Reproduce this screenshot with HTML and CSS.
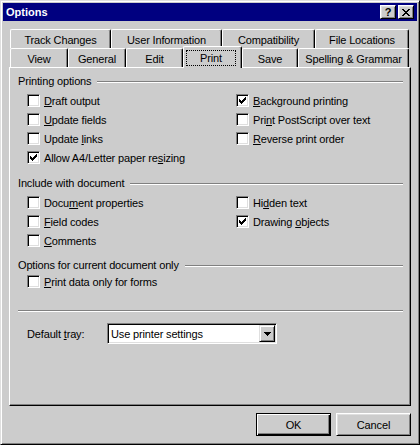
FILE: index.html
```html
<!DOCTYPE html>
<html>
<head>
<meta charset="utf-8">
<title>Options</title>
<link rel="stylesheet" href="styles.css">
</head>
<body>
<div class="window">
  <div class="titlebar">
    <span class="title">Options</span>
    <div class="tb-buttons">
      <span class="tb-btn help">?</span>
      <span class="tb-btn close"><svg width="8" height="7" viewBox="0 0 8 7" shape-rendering="crispEdges"><path d="M0 0h2v1h-2z M6 0h2v1h-2z M1 1h2v1h-2z M5 1h2v1h-2z M2 2h4v1h-4z M3 3h2v1h-2z M2 4h4v1h-4z M1 5h2v1h-2z M5 5h2v1h-2z M0 6h2v1h-2z M6 6h2v1h-2z" fill="#000"/></svg></span>
    </div>
  </div>

  <div class="tabs">
    <div class="tab-row back">
      <div class="tab w-track">Track Changes</div>
      <div class="tab w-user">User Information</div>
      <div class="tab w-compat">Compatibility</div>
      <div class="tab w-files">File Locations</div>
    </div>
    <div class="tab-row front">
      <div class="tab w-view">View</div>
      <div class="tab w-general">General</div>
      <div class="tab w-edit">Edit</div>
      <div class="tab w-print selected"><span class="focus">Print</span></div>
      <div class="tab w-save">Save</div>
      <div class="tab w-spell">Spelling &amp; Grammar</div>
    </div>
  </div>

  <div class="panel">
    <div class="group-title first"><span>Printing options</span></div>
    <div class="cols">
      <div class="col left">
        <label class="cb-row"><span class="cb"></span><span><u>D</u>raft output</span></label>
        <label class="cb-row"><span class="cb"></span><span><u>U</u>pdate fields</span></label>
        <label class="cb-row"><span class="cb"></span><span>Update <u>l</u>inks</span></label>
        <label class="cb-row"><span class="cb"><svg class="check" width="11" height="11" viewBox="1 1 11 11" shape-rendering="crispEdges"><path d="M9 3h1v1h-1z M8 4h2v1h-2z M3 5h1v1h-1z M7 5h3v1h-3z M3 6h2v1h-2z M6 6h3v1h-3z M3 7h5v1h-5z M4 8h3v1h-3z M5 9h1v1h-1z" fill="#000"/></svg></span><span>Allow A4/Letter paper re<u>s</u>izing</span></label>
      </div>
      <div class="col right">
        <label class="cb-row"><span class="cb"><svg class="check" width="11" height="11" viewBox="1 1 11 11" shape-rendering="crispEdges"><path d="M9 3h1v1h-1z M8 4h2v1h-2z M3 5h1v1h-1z M7 5h3v1h-3z M3 6h2v1h-2z M6 6h3v1h-3z M3 7h5v1h-5z M4 8h3v1h-3z M5 9h1v1h-1z" fill="#000"/></svg></span><span><u>B</u>ackground printing</span></label>
        <label class="cb-row"><span class="cb"></span><span>Pri<u>n</u>t PostScript over text</span></label>
        <label class="cb-row"><span class="cb"></span><span><u>R</u>everse print order</span></label>
      </div>
    </div>

    <div class="group-title second"><span>Include with document</span></div>
    <div class="cols">
      <div class="col left">
        <label class="cb-row"><span class="cb"></span><span>Docu<u>m</u>ent properties</span></label>
        <label class="cb-row"><span class="cb"></span><span><u>F</u>ield codes</span></label>
        <label class="cb-row"><span class="cb"></span><span><u>C</u>omments</span></label>
      </div>
      <div class="col right">
        <label class="cb-row"><span class="cb"></span><span>Hi<u>d</u>den text</span></label>
        <label class="cb-row"><span class="cb"><svg class="check" width="11" height="11" viewBox="1 1 11 11" shape-rendering="crispEdges"><path d="M9 3h1v1h-1z M8 4h2v1h-2z M3 5h1v1h-1z M7 5h3v1h-3z M3 6h2v1h-2z M6 6h3v1h-3z M3 7h5v1h-5z M4 8h3v1h-3z M5 9h1v1h-1z" fill="#000"/></svg></span><span>Drawing <u>o</u>bjects</span></label>
      </div>
    </div>

    <div class="group-title third"><span>Options for current document only</span></div>
    <div class="cols tight">
      <div class="col left">
        <label class="cb-row"><span class="cb"></span><span><u>P</u>rint data only for forms</span></label>
      </div>
    </div>

    <div class="separator"></div>

    <div class="tray-row">
      <span class="tray-label">Default <u>t</u>ray:</span>
      <div class="combo">
        <span class="combo-text">Use printer settings</span>
        <span class="combo-btn"><svg width="7" height="4" viewBox="0 0 7 4" shape-rendering="crispEdges"><path d="M0 0h7v1h-7z M1 1h5v1h-5z M2 2h3v1h-3z M3 3h1v1h-1z" fill="#000"/></svg></span>
      </div>
    </div>
  </div>

  <div class="buttons">
    <button class="btn default">OK</button>
    <button class="btn">Cancel</button>
  </div>
</div>
</body>
</html>
```

FILE: styles.css
```css
html, body {
  margin: 0;
  padding: 0;
  background: #cccccc;
}

body {
  font-family: "Liberation Sans", Arial, sans-serif;
  font-size: 11px;
  letter-spacing: -0.15px;
  color: #000;
}

.window {
  width: 420px;
  height: 445px;
  box-sizing: border-box;
  background: #cccccc;
  border: 1px solid;
  border-color: #dfdfdf #000 #000 #dfdfdf;
  box-shadow: inset 1px 1px #fff, inset -1px -1px #808080;
  padding: 2px;
  display: flex;
  flex-direction: column;
}

/* Title bar */
.titlebar {
  height: 18px;
  flex: none;
  background: #000080;
  color: #fff;
  display: flex;
  align-items: center;
  padding: 0 3px;
}

.title {
  font-weight: bold;
  font-size: 11px;
  line-height: 13px;
  letter-spacing: 0;
}

.tb-buttons {
  margin-left: auto;
  display: flex;
  gap: 2px;
}

.tb-btn {
  width: 16px;
  height: 14px;
  box-sizing: border-box;
  background: #cccccc;
  border: 1px solid;
  border-color: #fff #000 #000 #fff;
  box-shadow: inset 1px 1px #dfdfdf, inset -1px -1px #808080;
  display: flex;
  align-items: center;
  justify-content: center;
  color: #000;
}

.tb-btn.help {
  font-weight: bold;
  font-size: 11px;
  line-height: 12px;
}

.tb-btn.close svg {
  display: block;
}

/* Tabs */
.tabs {
  margin-top: 8px;
  margin-left: 7px;
  flex: none;
}

.tab-row {
  display: flex;
  height: 19px;
  align-items: flex-end;
}

.tab {
  height: 19px;
  box-sizing: border-box;
  border-top: 1px solid #fff;
  border-left: 1px solid #fff;
  border-right: 1px solid #000;
  border-radius: 2px 2px 0 0;
  box-shadow: inset -1px 0 #808080;
  display: flex;
  align-items: center;
  justify-content: center;
  padding-top: 2px;
  white-space: nowrap;
  background: #cccccc;
}

.w-track { width: 101px; }
.w-user { width: 111px; }
.w-compat { width: 93px; }
.w-files { width: 94px; }

.w-view { width: 58px; }
.w-general { width: 58px; }
.w-edit { width: 57px; }
.w-print { width: 59px; }
.w-save { width: 56px; }
.w-spell { width: 111px; }

.tab.selected {
  height: 22px;
  margin-bottom: -1px;
  position: relative;
  z-index: 2;
  padding-top: 0;
  padding-right: 3px;
}

.focus {
  display: flex;
  align-items: center;
  justify-content: center;
  width: 50px;
  height: 16px;
  box-sizing: border-box;
  border: 1px dotted #000;
}

/* Panel */
.panel {
  margin-left: 6px;
  width: 402px;
  height: 339px;
  box-sizing: border-box;
  border: 1px solid;
  border-color: #fff #000 #000 #fff;
  box-shadow: inset -1px -1px #808080;
  padding: 7px 7px 0 8px;
  position: relative;
  z-index: 1;
  flex: none;
}

.group-title {
  display: flex;
  align-items: center;
  height: 13px;
  line-height: 13px;
  gap: 6px;
}

.group-title::after {
  content: "";
  flex: 1;
  height: 0;
  border-top: 1px solid #808080;
  border-bottom: 1px solid #fff;
  margin-top: 1px;
}

.group-title.second { margin-top: 10px; }
.group-title.third { margin-top: 9px; }

.cols {
  display: flex;
  padding-left: 9px;
  margin-top: 3px;
}

.cols.tight { margin-top: 0; }

.col {
  display: flex;
  flex-direction: column;
}

.col.left { width: 209px; }

.cb-row {
  display: flex;
  align-items: center;
  gap: 4px;
  height: 19px;
  white-space: nowrap;
}

.cb {
  width: 13px;
  height: 13px;
  box-sizing: border-box;
  flex: none;
  background: #fff;
  border: 1px solid;
  border-color: #808080 #fff #fff #808080;
  box-shadow: inset 1px 1px #000, inset -1px -1px #dfdfdf;
  display: block;
}

.cb .check {
  display: block;
}

u {
  text-decoration: underline;
  text-underline-offset: 1px;
}

.separator {
  margin-top: 19px;
  height: 0;
  border-top: 1px solid #808080;
  border-bottom: 1px solid #fff;
}

.tray-row {
  display: flex;
  align-items: center;
  margin-top: 11px;
  padding-left: 9px;
}

.tray-label {
  width: 80px;
  flex: none;
}

.combo {
  width: 170px;
  height: 21px;
  box-sizing: border-box;
  background: #fff;
  border: 1px solid;
  border-color: #808080 #fff #fff #808080;
  box-shadow: inset 1px 1px #000, inset -1px -1px #dfdfdf;
  padding: 1px 1px 1px 2px;
  display: flex;
  align-items: center;
}

.combo-text {
  flex: 1;
  padding-left: 1px;
}

.combo-btn {
  width: 16px;
  height: 17px;
  box-sizing: border-box;
  background: #cccccc;
  border: 1px solid;
  border-color: #dfdfdf #000 #000 #dfdfdf;
  box-shadow: inset 1px 1px #fff, inset -1px -1px #808080;
  display: flex;
  align-items: center;
  justify-content: center;
}

.combo-btn svg { display: block; }

/* Bottom buttons */
.buttons {
  display: flex;
  justify-content: flex-end;
  gap: 5px;
  margin-top: 7px;
  padding-right: 6px;
}

.btn {
  width: 75px;
  height: 23px;
  box-sizing: border-box;
  background: #cccccc;
  font-family: "Liberation Sans", Arial, sans-serif;
  font-size: 11px;
  letter-spacing: -0.15px;
  color: #000;
  padding: 0;
  margin: 0;
  border: 1px solid;
  border-color: #fff #000 #000 #fff;
  box-shadow: inset 1px 1px #dfdfdf, inset -1px -1px #808080;
  border-radius: 0;
}

.btn.default {
  border-color: #000;
  box-shadow: inset 1px 1px #fff, inset -1px -1px #000, inset -2px -2px #808080;
}
```
